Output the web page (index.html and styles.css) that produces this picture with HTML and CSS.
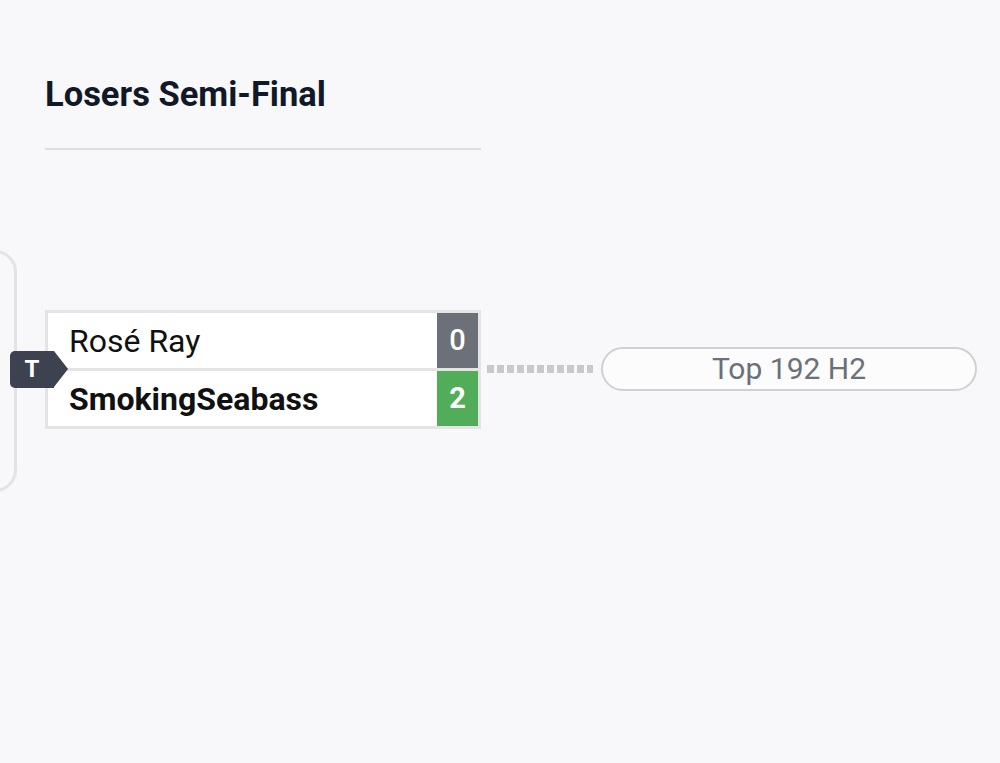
FILE: index.html
```html
<!DOCTYPE html>
<html>
<head>
<meta charset="utf-8">
<link rel="stylesheet" href="styles.css">
</head>
<body>
<div class="page">
  <header class="round-head">
    <h1 class="round-title">Losers Semi-Final</h1>
    <div class="round-rule"></div>
  </header>
  <div class="canvas">
    <div class="bracket-line"></div>
    <div class="badge">T</div>
    <div class="match">
      <div class="slot">
        <span class="name">Rosé Ray</span>
        <span class="score loss">0</span>
      </div>
      <div class="slot win">
        <span class="name">SmokingSeabass</span>
        <span class="score won">2</span>
      </div>
    </div>
    <div class="connector"></div>
    <div class="next">Top 192 H2</div>
  </div>
</div>
</body>
</html>
```
FILE: styles.css
```css
html, body {
  margin: 0;
  padding: 0;
  background: #f8f8fa;
  font-family: Roboto, "Liberation Sans", sans-serif;
  width: 1000px;
  height: 763px;
  overflow: hidden;
}
.page {
  position: relative;
  width: 1000px;
  height: 763px;
}
.round-head {
  padding: 72px 0 0 45px;
  width: 436px;
}
.round-title {
  margin: 0;
  font-size: 34.5px;
  font-weight: 700;
  color: #111827;
  line-height: 44px;
}
.round-rule {
  margin-top: 32px;
  height: 2px;
  background: #dcdde3;
}
.canvas {
  position: relative;
  height: 600px;
}
.bracket-line {
  position: absolute;
  left: -33px;
  top: 100px;
  width: 44px;
  height: 236px;
  border: 3px solid #e3e3e6;
  border-radius: 22px;
}
.badge {
  position: absolute;
  left: 10px;
  top: 201px;
  width: 44px;
  height: 37px;
  background: #3c4250;
  color: #fff;
  font-weight: 700;
  font-size: 24px;
  line-height: 37px;
  text-align: center;
  border-radius: 5px 0 0 5px;
  z-index: 2;
}
.badge::after {
  content: "";
  position: absolute;
  left: 44px;
  top: 0;
  border-top: 18.5px solid transparent;
  border-bottom: 18.5px solid transparent;
  border-left: 14px solid #3c4250;
}
.match {
  position: absolute;
  left: 45px;
  top: 160px;
  width: 430px;
  border: 3px solid #e4e4e4;
  background: #e4e4e4;
  display: flex;
  flex-direction: column;
  gap: 3px;
}
.slot {
  display: flex;
  align-items: center;
  height: 55px;
  background: #fff;
}
.name {
  flex: 1;
  padding-left: 21px;
  font-size: 32px;
  color: #111;
}
.win .name {
  font-weight: 700;
}
.score {
  width: 41px;
  height: 55px;
  line-height: 55px;
  text-align: center;
  color: #fff;
  font-size: 29px;
  font-weight: 500;
}
.loss { background: #6b7079; }
.won { background: #52ad59; font-weight: 700; }
.connector {
  position: absolute;
  left: 487px;
  top: 215px;
  width: 106px;
  height: 8px;
  background-image: linear-gradient(to right, #c9c9cb 0 7px, transparent 7px 10px);
  background-size: 10px 8px;
}
.next {
  position: absolute;
  left: 601px;
  top: 197px;
  width: 372px;
  height: 40px;
  border: 2px solid #cfd0d3;
  border-radius: 22px;
  text-align: center;
  line-height: 40px;
  font-size: 30px;
  color: #6b7079;
  background: #fcfcfd;
}
```
